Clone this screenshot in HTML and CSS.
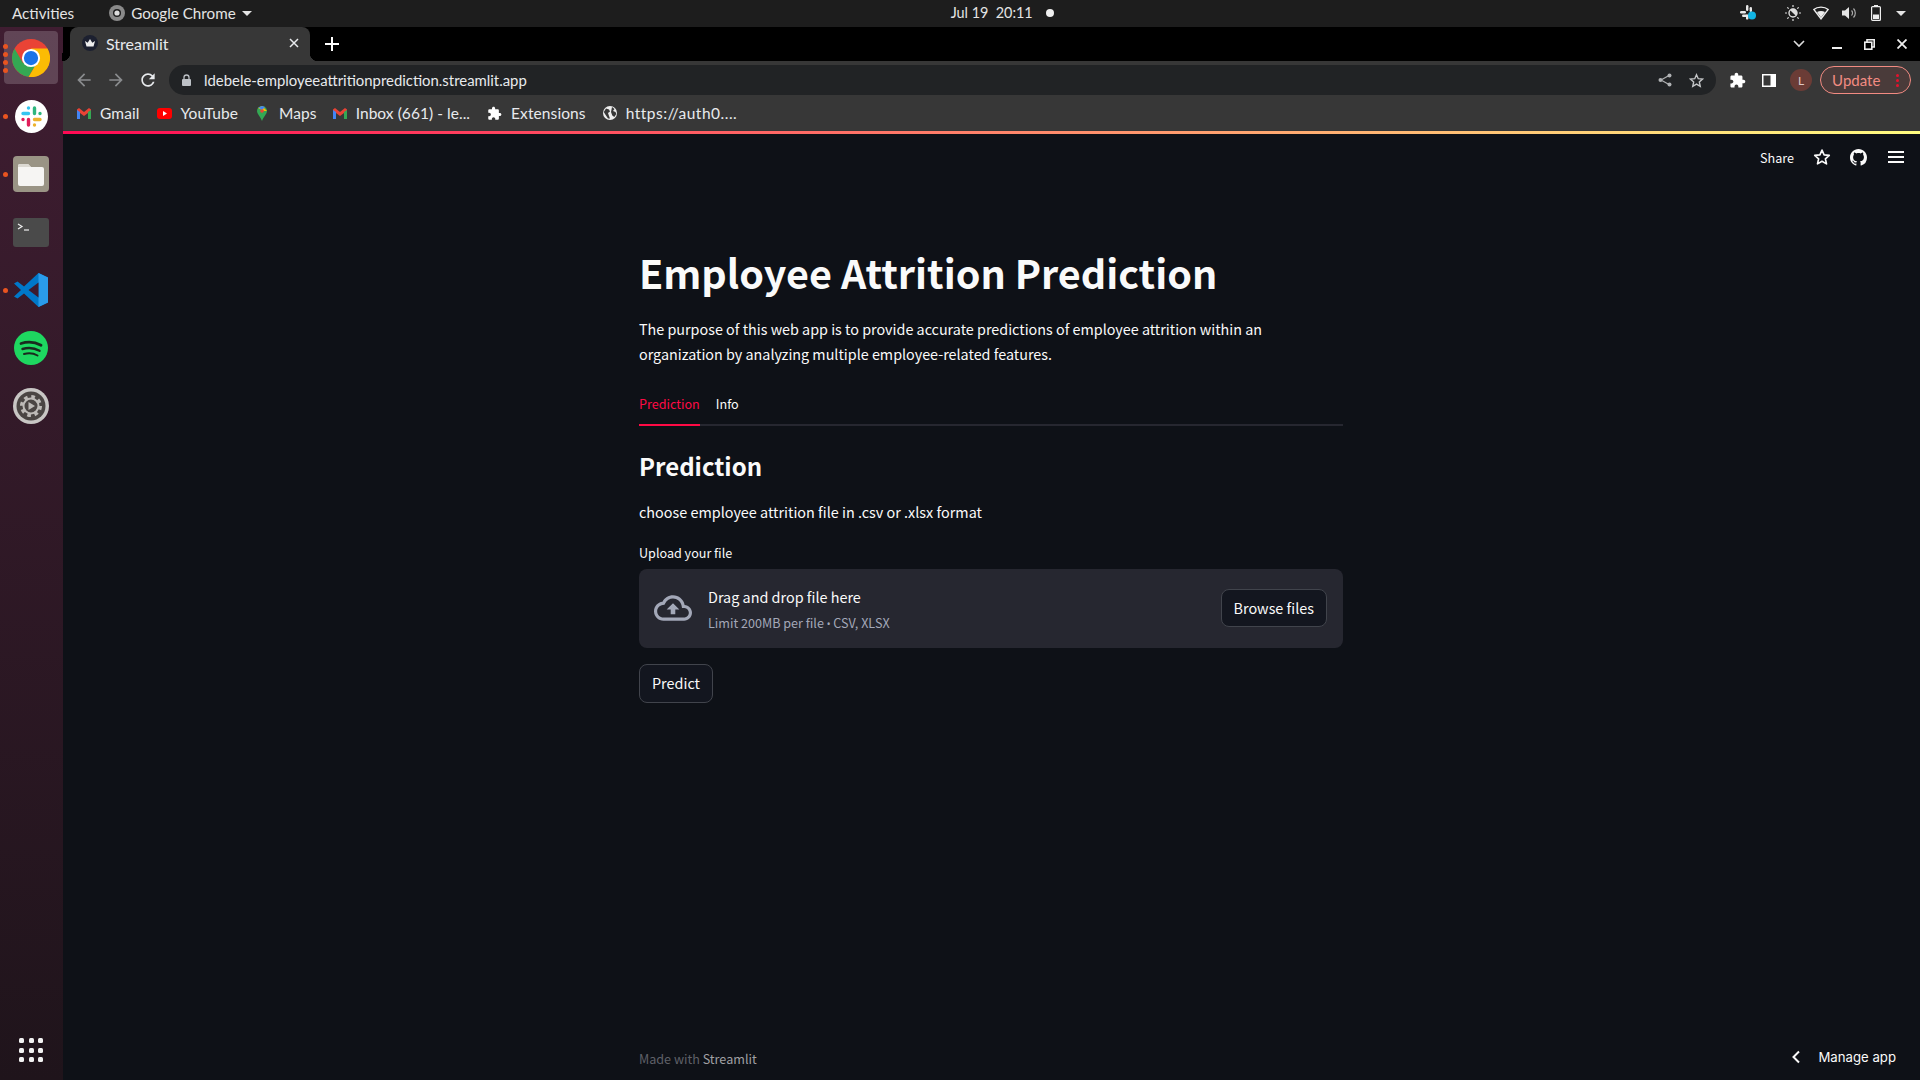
FILE: index.html
```html
<!DOCTYPE html>
<html lang="en">
<head>
    <meta charset="UTF-8">
    <title>Streamlit</title>
    <link rel="stylesheet" href="styles.css">
</head>
<body>
<div class="desktop">
    <header class="topbar">
        <span class="activities">Activities</span>
        <span class="app-menu">
            <svg class="app-menu-icon" viewBox="0 0 16 16"><circle cx="8" cy="8" r="8" fill="#8a8a8a"/><circle cx="8" cy="8" r="4" fill="#1d1d1d"/><circle cx="8" cy="8" r="2.6" fill="#ddd"/></svg>
            Google Chrome
            <i class="caret"></i>
        </span>
        <span class="clock">Jul 19&nbsp; 20:11<i class="clock-dot"></i></span>
        <span class="tray">
            <svg class="tray-slack" width="18" height="16" viewBox="0 0 18 16"><g fill="#e8e8e8"><rect x="0" y="6" width="6" height="2.4" rx="1.2"/><rect x="6" y="0" width="2.4" height="6" rx="1.2"/><rect x="9.6" y="2" width="2.4" height="5" rx="1.2"/><rect x="2" y="9.6" width="6" height="2.4" rx="1.2"/><rect x="6" y="9.6" width="2.4" height="5" rx="1.2"/></g><circle cx="12" cy="10.5" r="4" fill="#12b5e5"/></svg>
            <svg width="16" height="16" viewBox="0 0 16 16"><circle cx="8" cy="8" r="4" fill="none" stroke="#ddd" stroke-width="1.4"/><path d="M8 4a4 4 0 0 1 0 8z" fill="#ddd" transform="rotate(-45 8 8)"/><path d="M8 0v2M8 14v2M0 8h2M14 8h2M2.3 2.3l1.4 1.4M12.3 12.3l1.4 1.4M13.7 2.3l-1.4 1.4M3.7 12.3l-1.4 1.4" stroke="#ddd" stroke-width="1.2"/></svg>
            <svg width="16" height="14" viewBox="0 0 16 14"><path d="M0.8 3.5C4.5 0.3 11.5 0.3 15.2 3.5L8 12.8z" fill="none" stroke="#eee" stroke-width="1.4"/><path d="M4 6C6.5 4.6 9.5 4.6 12 6L8 11.500z" fill="#eee"/></svg>
            <svg width="16" height="14" viewBox="0 0 16 14"><path d="M0 4.500h3L7 1v12l-4-3.500H0z" fill="#e4e4e4"/><path d="M9.500 4.500a3.500 3.500 0 0 1 0 5M11.500 2.500a6.500 6.500 0 0 1 0 9" fill="none" stroke="#aaa" stroke-width="1.2"/></svg>
            <svg width="10" height="16" viewBox="0 0 10 16"><rect x=".6" y="1.600" width="8.800" height="13.800" rx="1" fill="none" stroke="#eee" stroke-width="1.2"/><rect x="3" y="0" width="4" height="1.600" fill="#eee"/><rect x="2" y="9.500" width="6" height="4.500" fill="#eee"/></svg>
            <i class="caret"></i>
        </span>
    </header>

    <div class="workarea">
        <nav class="dock">
            <div class="dock-item dock-active">
                <span class="run-dots"><i></i><i></i><i></i><i></i></span>
                <svg width="38" height="38" viewBox="0 0 48 48"><circle cx="24" cy="24" r="24" fill="#ea4335"/><path d="M3.200 12A24 24 0 0 0 21 47.800L31 31 13.600 30z" fill="#34a853"/><path d="M21 48A24 24 0 0 0 44.800 12H24l7 19z" fill="#fbbc04"/><circle cx="24" cy="24" r="11.500" fill="#fff"/><circle cx="24" cy="24" r="9" fill="#1a73e8"/></svg>
            </div>
            <div class="dock-item">
                <span class="run-dots"><i></i></span>
                <svg width="33" height="33" viewBox="0 0 33 33"><circle cx="16.500" cy="16.500" r="16.500" fill="#fff"/><g stroke-width="3.4" stroke-linecap="round" fill="none"><path d="M8 13.500h5.500M13.500 8h.01" stroke="#36c5f0"/><path d="M19.500 8v5.500M25 13.500h.01" stroke="#2eb67d"/><path d="M19.500 19.500H25M19.500 25h.01" stroke="#ecb22e"/><path d="M13.500 19.500V25M8 19.500h.01" stroke="#e01e5a"/></g></svg>
            </div>
            <div class="dock-item">
                <span class="run-dots"><i></i></span>
                <svg width="36" height="36" viewBox="0 0 36 36"><rect width="36" height="36" rx="4" fill="#9a9485"/><path d="M5 10a2 2 0 0 1 2-2h8l3 3h11a2 2 0 0 1 2 2v15a2 2 0 0 1-2 2H7a2 2 0 0 1-2-2z" fill="#f6f5f3"/><path d="M5 10a2 2 0 0 1 2-2h8l3 3H5z" fill="#dcd9d2"/></svg>
            </div>
            <div class="dock-item">
                <svg width="36" height="29" viewBox="0 0 36 29"><rect width="36" height="29" rx="3" fill="#4a4a4a"/><path d="M5 6l4 2.500-4 2.500" fill="none" stroke="#eee" stroke-width="1.2"/><path d="M11 12h5" stroke="#eee" stroke-width="1.2"/></svg>
            </div>
            <div class="dock-item">
                <span class="run-dots"><i></i></span>
                <svg width="34" height="34" viewBox="0 0 34 34"><path d="M24.500 0L34 4.500v25L24.500 34 10 20.500 3.500 25.500 0 23.500 7 17 0 10.500 3.500 8.500 10 13.500z" fill="#0078c9"/><path d="M24.500 0L34 4.500v25L24.500 34z" fill="#2a9bea"/><path d="M24.500 9.500L14.500 17l10 7.500z" fill="#3d1c2e"/></svg>
            </div>
            <div class="dock-item">
                <svg width="34" height="34" viewBox="0 0 34 34"><circle cx="17" cy="17" r="17" fill="#1ed760"/><g fill="none" stroke="#1a2a1e" stroke-linecap="round"><path d="M7 12.500c6.500-2 14-1.500 20 1.800" stroke-width="2.8"/><path d="M8.500 18c5.500-1.500 12-1 17 1.800" stroke-width="2.4"/><path d="M10 23c4.500-1.200 9.500-.8 13.500 1.500" stroke-width="2"/></g></svg>
            </div>
            <div class="dock-item">
                <svg width="36" height="36" viewBox="0 0 36 36"><circle cx="18" cy="18" r="18" fill="#c8c6c4"/><circle cx="18" cy="18" r="14.500" fill="#4a4543"/><circle cx="18" cy="18" r="9" fill="none" stroke="#bdbab7" stroke-width="4" stroke-dasharray="3.500 3.570"/><circle cx="18" cy="18" r="7.500" fill="none" stroke="#bdbab7" stroke-width="2"/><path d="M15.500 14l6.500 4-6.500 4z" fill="#bdbab7"/></svg>
            </div>
            <div class="dock-apps">
                <i></i><i></i><i></i><i></i><i></i><i></i><i></i><i></i><i></i>
            </div>
        </nav>

        <div class="window">
            <div class="tabstrip">
                <div class="tab">
                    <svg class="favicon" width="16" height="16" viewBox="0 0 16 16"><circle cx="8" cy="8" r="8" fill="#1c2030"/><path d="M3 6l2.700 1.800L8 4l2.300 3.800L13 6l-1.500 5.500h-7z" fill="#eee"/></svg>
                    <span class="tab-title">Streamlit</span>
                    <svg width="10" height="10" viewBox="0 0 10 10"><path d="M1 1l8 8M9 1l-8 8" stroke="#e8eaed" stroke-width="1.5"/></svg>
                </div>
                <svg class="new-tab" width="14" height="14" viewBox="0 0 14 14"><path d="M7 0v14M0 7h14" stroke="#fff" stroke-width="2"/></svg>
                <span class="spacer"></span>
                <svg class="tab-list" width="12" height="8" viewBox="0 0 12 8"><path d="M1 1l5 5 5-5" fill="none" stroke="#ddd" stroke-width="1.6"/></svg>
                <span class="win-min"></span>
                <svg class="win-restore" width="11" height="11" viewBox="0 0 11 11"><path d="M3 3V.8h7.200V8H8" fill="none" stroke="#eee" stroke-width="1.6"/><rect x=".8" y="3.200" width="7" height="7" fill="none" stroke="#eee" stroke-width="1.6"/></svg>
                <svg class="win-close" width="10" height="10" viewBox="0 0 10 10"><path d="M.5.5l9 9M9.500.5l-9 9" stroke="#eee" stroke-width="1.8"/></svg>
            </div>

            <div class="toolbar">
                <svg width="20" height="20" viewBox="0 0 24 24"><path d="M20 11H7.800l5.600-5.600L12 4l-8 8 8 8 1.400-1.400L7.800 13H20z" fill="#8a8c8e"/></svg>
                <svg class="nav-forward" width="20" height="20" viewBox="0 0 24 24"><path d="M4 11h12.200l-5.600-5.600L12 4l8 8-8 8-1.400-1.400 5.600-5.600H4z" fill="#8a8c8e"/></svg>
                <svg class="nav-reload" width="20" height="20" viewBox="0 0 24 24"><path d="M17.650 6.350C16.200 4.900 14.210 4 12 4c-4.420 0-7.990 3.580-7.990 8s3.570 8 7.990 8c3.730 0 6.840-2.550 7.730-6h-2.080c-.82 2.330-3.040 4-5.650 4-3.310 0-6-2.690-6-6s2.690-6 6-6c1.660 0 3.140.69 4.220 1.780L13 11h7V4l-2.350 2.350z" fill="#e8eaed"/></svg>
                <div class="omnibox">
                    <svg width="9" height="12" viewBox="0 0 9 12"><rect y="5" width="9" height="7" rx="1" fill="#bdc1c6"/><path d="M2 5.500V3.500a2.500 2.500 0 0 1 5 0v2" fill="none" stroke="#bdc1c6" stroke-width="1.3"/></svg>
                    <span class="url">ldebele-employeeattritionprediction.streamlit.app</span>
                    <span class="spacer"></span>
                    <svg width="14" height="14" viewBox="0 0 14 14"><path d="M3 7l8-4.500M3 7l8 4.500" stroke="#b0b2b4" stroke-width="1.2"/><circle cx="2.500" cy="7" r="2" fill="#b0b2b4"/><circle cx="11.500" cy="2.500" r="2" fill="#b0b2b4"/><circle cx="11.500" cy="11.500" r="2" fill="#b0b2b4"/></svg>
                    <svg class="omni-star" width="15" height="15" viewBox="0 0 24 24"><path d="M12 2.800l2.800 6.300 6.900.7-5.200 4.600 1.500 6.800-6-3.500-6 3.500 1.500-6.800-5.200-4.600 6.900-.7z" fill="none" stroke="#c4c6c8" stroke-width="2.2"/></svg>
                </div>
                <svg class="ext-icon" width="17" height="17" viewBox="0 0 24 24"><path d="M20.500 11H19V7c0-1.100-.9-2-2-2h-4V3.500C13 2.120 11.880 1 10.500 1S8 2.120 8 3.500V5H4c-1.100 0-1.990.9-1.990 2v3.800H3.500c1.490 0 2.700 1.210 2.700 2.700s-1.210 2.700-2.700 2.700H2V20c0 1.100.9 2 2 2h3.800v-1.500c0-1.490 1.210-2.700 2.700-2.700 1.490 0 2.700 1.210 2.700 2.700V22H17c1.100 0 2-.9 2-2v-4h1.500c1.380 0 2.500-1.120 2.500-2.500S21.880 11 20.500 11z" fill="#fff"/></svg>
                <svg class="panel-icon" width="14" height="13" viewBox="0 0 14 13"><rect width="14" height="13" fill="#fff"/><rect x="1.500" y="1.500" width="7" height="10" fill="#373737"/></svg>
                <span class="avatar">L</span>
                <span class="update">Update<b class="update-dots"><i></i><i></i><i></i></b></span>
            </div>

            <div class="bookmarks">
                <span class="bookmark"><svg width="14" height="11" viewBox="0 0 14 11"><path d="M0 1.500V11h3V5l4 3 4-3v6h3V1.500L12 0 7 4 2 0z" fill="#ea4335"/><path d="M0 2v9h3V4z" fill="#4285f4"/><path d="M14 2v9h-3V4z" fill="#34a853"/></svg>Gmail</span>
                <span class="bookmark"><svg width="15" height="11" viewBox="0 0 15 11"><rect width="15" height="11" rx="3" fill="#f00"/><path d="M6 3l4 2.500L6 8z" fill="#fff"/></svg>YouTube</span>
                <span class="bookmark bm-maps"><svg width="10" height="15" viewBox="0 0 10 15"><path d="M5 0a5 5 0 0 1 5 5C10 8 6.500 10.500 5 15 3.500 10.500 0 8 0 5a5 5 0 0 1 5-5z" fill="#34a853"/><path d="M1 2l4-2 5 5-3 0z" fill="#fbbc04"/><path d="M1.500 1.500L5 0l3 1-3 3z" fill="#4285f4"/><circle cx="5" cy="5" r="1.800" fill="#ea4335"/></svg>Maps</span>
                <span class="bookmark bm-inbox"><svg width="14" height="11" viewBox="0 0 14 11"><path d="M0 1.500V11h3V5l4 3 4-3v6h3V1.500L12 0 7 4 2 0z" fill="#ea4335"/><path d="M0 2v9h3V4z" fill="#4285f4"/><path d="M14 2v9h-3V4z" fill="#34a853"/></svg>Inbox (661) - le...</span>
                <span class="bookmark"><svg width="15" height="15" viewBox="0 0 24 24"><path d="M20.500 11H19V7c0-1.100-.9-2-2-2h-4V3.500C13 2.120 11.880 1 10.500 1S8 2.120 8 3.500V5H4c-1.100 0-1.990.9-1.990 2v3.800H3.500c1.490 0 2.700 1.210 2.700 2.700s-1.210 2.700-2.700 2.700H2V20c0 1.100.9 2 2 2h3.800v-1.500c0-1.490 1.210-2.700 2.700-2.700 1.490 0 2.700 1.210 2.700 2.700V22H17c1.100 0 2-.9 2-2v-4h1.500c1.380 0 2.500-1.120 2.500-2.500S21.880 11 20.500 11z" fill="#fff"/></svg>Extensions</span>
                <span class="bookmark bm-auth"><svg width="14" height="14" viewBox="0 0 14 14"><circle cx="7" cy="7" r="7" fill="#eee"/><path d="M3 2.500l3 1 1 2-2 1.500 1 3 1 2.500-2 0L2 8 .8 6zM9 1l2.500 2-1.500 2 2.500 1 .8 2-2 3-2-1.500L8 6z" fill="#373737"/></svg>https://auth0....</span>
            </div>

            <div class="accent-line"></div>

            <div class="app">
                <div class="app-header">
                    <span class="share">Share</span>
                    <svg width="18" height="18" viewBox="0 0 24 24"><path d="M12 2.800l2.800 6.300 6.900.7-5.200 4.600 1.500 6.800-6-3.500-6 3.500 1.500-6.800-5.200-4.600 6.900-.7z" fill="none" stroke="#fafafa" stroke-width="2.2" stroke-linejoin="round"/></svg>
                    <svg class="gh-icon" width="17" height="17" viewBox="0 0 16 16"><path d="M8 0C3.580 0 0 3.580 0 8c0 3.540 2.290 6.530 5.470 7.590.4.070.55-.17.55-.38 0-.19-.01-.82-.01-1.490-2.010.37-2.530-.49-2.690-.94-.09-.23-.48-.94-.82-1.130-.28-.15-.68-.52-.01-.53.630-.01 1.080.58 1.230.82.720 1.210 1.870.87 2.330.66.070-.52.280-.87.510-1.070-1.780-.2-3.640-.89-3.640-3.950 0-.87.310-1.590.820-2.150-.08-.2-.36-1.020.08-2.120 0 0 .67-.21 2.200.82.640-.18 1.320-.27 2-.27s1.360.09 2 .27c1.530-1.040 2.200-.82 2.200-.82.440 1.100.16 1.920.08 2.120.51.560.82 1.270.82 2.150 0 3.070-1.870 3.750-3.650 3.950.29.250.54.730.54 1.480 0 1.070-.01 1.930-.01 2.200 0 .21.150.46.550.38A8.010 8.010 0 0 0 16 8c0-4.420-3.580-8-8-8z" fill="#fafafa"/></svg>
                    <span class="menu-icon"><i></i><i></i><i></i></span>
                </div>

                <main class="block">
                    <h1 class="title">Employee Attrition Prediction</h1>
                    <p class="intro">The purpose of this web app is to provide accurate predictions of employee attrition within an organization by analyzing multiple employee-related features.</p>

                    <div class="tabs">
                        <span class="tabs-item tabs-selected">Prediction</span>
                        <span class="tabs-item">Info</span>
                    </div>

                    <h2 class="subtitle">Prediction</h2>
                    <p class="choose">choose employee attrition file in .csv or .xlsx format</p>

                    <label class="upload-label">Upload your file</label>
                    <div class="dropzone">
                        <svg class="cloud" width="38" height="38" viewBox="0 0 24 24"><path d="M19.350 10.040C18.670 6.590 15.640 4 12 4 9.110 4 6.600 5.640 5.350 8.040 2.340 8.360 0 10.910 0 14c0 3.310 2.690 6 6 6h13c2.760 0 5-2.240 5-5 0-2.640-2.050-4.780-4.650-4.960zM19 18H6c-2.210 0-4-1.790-4-4 0-2.050 1.530-3.760 3.560-3.970l1.070-.11.500-.95C8.080 7.140 9.940 6 12 6c2.620 0 4.880 1.860 5.390 4.430l.3 1.500 1.530.11c1.560.1 2.780 1.410 2.780 2.960 0 1.650-1.350 3-3 3zM8 13h2.550v3h2.900v-3H16l-4-4z" fill="#a3a8b8"/></svg>
                        <div class="drop-text">
                            <span class="drop-main">Drag and drop file here</span>
                            <small class="drop-limit">Limit 200MB per file <span class="bullet">•</span> CSV, XLSX</small>
                        </div>
                        <button class="st-button">Browse files</button>
                    </div>
                    <button class="st-button predict">Predict</button>
                </main>

                <footer class="app-footer">
                    <span class="made">Made with <b>Streamlit</b></span>
                    <span class="manage">
                        <svg width="10" height="14" viewBox="0 0 10 14"><path d="M8 1.500L2.500 7 8 12.500" fill="none" stroke="#fafafa" stroke-width="2"/></svg>
                        Manage app
                    </span>
                </footer>
            </div>
        </div>
    </div>
</div>
</body>
</html>
```

FILE: styles.css
```css
* {
    margin: 0;
    padding: 0;
    box-sizing: border-box;
}
html, body {
    height: 100%;
    overflow: hidden;
}
body {
    background: #0e1117;
    font-family: "Noto Sans CJK SC", "Noto Sans", sans-serif;
    color: #fafafa;
}
i {
    font-style: normal;
}
svg {
    flex: none;
    display: block;
}
.spacer {
    flex: 1;
}
.desktop {
    height: 1080px;
    display: flex;
    flex-direction: column;
}

/* gnome top bar */
.topbar {
    height: 27px;
    flex: none;
    background: #1d1d1d;
    display: flex;
    align-items: center;
    font-family: Lato, sans-serif;
    font-size: 15.2px;
    line-height: 26px;
    padding: 0 14px 1px 12px;
    color: #e4e4e4;
}
.app-menu {
    display: flex;
    align-items: center;
    margin-left: 35px;
}
.app-menu-icon {
    width: 16px;
    height: 16px;
    margin-right: 6px;
}
.caret {
    width: 0;
    height: 0;
    border: 5px solid transparent;
    border-top: 5px solid #e4e4e4;
    border-bottom: 0;
    margin-left: 6px;
}
.clock {
    display: flex;
    align-items: center;
    margin-left: 699px;
    font-size: 14.4px;
    white-space: pre;
}
.clock-dot {
    width: 8px;
    height: 8px;
    border-radius: 50%;
    background: #f0f0f0;
    margin-left: 13px;
}
.tray {
    display: flex;
    align-items: center;
    margin-left: auto;
}
.tray svg {
    margin-right: 13px;
}
.tray .tray-slack {
    margin-right: 27px;
}
.tray svg:nth-child(2) {
    margin-right: 12px;
}
.tray svg:nth-child(5) {
    margin-right: 15px;
}
.tray .caret {
    margin-left: 0;
}

/* dock */
.workarea {
    flex: 1;
    display: flex;
    min-height: 0;
}
.dock {
    width: 63px;
    flex: none;
    background: linear-gradient(#3f1d31, #1f141b);
    padding: 2px 1px 0 0;
    display: flex;
    flex-direction: column;
    align-items: center;
}
.dock-item {
    width: 54px;
    height: 58px;
    display: flex;
    align-items: center;
    justify-content: center;
    position: relative;
}
.dock-active::before {
    content: "";
    position: absolute;
    inset: 2px 0 3px;
    background: rgba(255, 255, 255, .18);
    border-radius: 4px;
}
.dock-item svg {
    position: relative;
}
.run-dots {
    position: absolute;
    left: -1px;
    top: 0;
    bottom: 0;
    display: flex;
    flex-direction: column;
    justify-content: center;
    gap: 3px;
    z-index: 1;
}
.run-dots i {
    width: 5px;
    height: 5px;
    border-radius: 50%;
    background: #e95420;
}
.dock-apps {
    margin-top: auto;
    margin-bottom: 18px;
    width: 24px;
    height: 24px;
    display: grid;
    grid-template-columns: repeat(3, 5px);
    grid-template-rows: repeat(3, 5px);
    justify-content: space-between;
    align-content: space-between;
}
.dock-apps i {
    background: #f2f2f2;
    border-radius: 1.5px;
}

/* chrome */
.window {
    flex: 1;
    min-width: 0;
    display: flex;
    flex-direction: column;
}
.tabstrip {
    height: 34px;
    flex: none;
    background: #000;
    display: flex;
    align-items: center;
    padding: 0 13px 0 7px;
}
.tab {
    width: 240px;
    align-self: stretch;
    background: #373737;
    border-radius: 8px 8px 0 0;
    display: flex;
    align-items: center;
    padding: 0 11px 2px 12px;
    font-family: Lato, sans-serif;
    font-size: 16px;
    color: #e8eaed;
    position: relative;
}
.tab::before, .tab::after {
    content: "";
    position: absolute;
    bottom: 0;
    width: 8px;
    height: 8px;
}
.tab::before {
    left: -8px;
    background: radial-gradient(circle at 0 0, #000 8px, #373737 8.5px);
}
.tab::after {
    right: -8px;
    background: radial-gradient(circle at 100% 0, #000 8px, #373737 8.5px);
}
.favicon {
    margin-right: 8px;
}
.tab-title {
    flex: 1;
}
.new-tab {
    margin-left: 15px;
}
.tab-list {
    margin-right: 27px;
}
.win-min {
    width: 10px;
    height: 2px;
    background: #eee;
    margin-top: 8px;
    margin-right: 22px;
}
.win-restore {
    margin-right: 22px;
}
.toolbar {
    height: 38px;
    flex: none;
    background: #373737;
    display: flex;
    align-items: center;
    padding: 0 9px 0 11px;
}
.nav-forward {
    margin-left: 12px;
}
.nav-reload {
    margin-left: 12px;
}
.omnibox {
    width: 1549px;
    height: 30px;
    margin-left: 11px;
    background: #212325;
    border-radius: 15px;
    display: flex;
    align-items: center;
    padding: 0 12px 0 13px;
}
.url {
    margin-left: 13px;
    font-family: Lato, sans-serif;
    font-size: 14.9px;
    line-height: 28px;
    padding-bottom: 1px;
    color: #e8eaed;
}
.omni-star {
    margin-left: 17px;
}
.ext-icon {
    margin-left: 12.5px;
}
.panel-icon {
    margin-left: 16.5px;
}
.avatar {
    width: 22px;
    height: 22px;
    margin-left: 14px;
    border-radius: 50%;
    background: #6b3c36;
    color: #e0c8c4;
    font-family: Lato, sans-serif;
    font-size: 12px;
    display: flex;
    align-items: center;
    justify-content: center;
}
.update {
    width: 91px;
    height: 28px;
    margin-left: 8px;
    border: 1px solid #f28b82;
    border-radius: 14px;
    background: #4a3b3a;
    color: #f28b82;
    font-family: Lato, sans-serif;
    font-size: 15px;
    display: flex;
    align-items: center;
    padding-left: 11px;
}
.update-dots {
    display: flex;
    flex-direction: column;
    gap: 2px;
    margin-left: auto;
    margin-right: 11px;
}
.update-dots i {
    width: 3px;
    height: 3px;
    border-radius: 50%;
    background: #e8112d;
}
.bookmarks {
    height: 32px;
    flex: none;
    background: #373737;
    display: flex;
    align-items: center;
    padding: 0 0 4px 14px;
    gap: 17px;
    font-family: Lato, sans-serif;
    font-size: 15.5px;
    letter-spacing: .1px;
    color: #e8eaed;
}
.bookmark {
    display: flex;
    align-items: center;
    gap: 9px;
}
.bm-maps {
    gap: 12px;
    margin-left: 2px;
    margin-right: -1px;
}
.bm-inbox {
    letter-spacing: .05px;
}
.bm-auth {
    letter-spacing: .5px;
}
.accent-line {
    height: 3px;
    flex: none;
    background: linear-gradient(90deg, #ff0a54, #fffd80);
}

/* streamlit app */
.app {
    flex: 1;
    min-height: 0;
    background: #0e1117;
    display: flex;
    flex-direction: column;
}
.app-header {
    height: 46px;
    flex: none;
    display: flex;
    align-items: center;
    justify-content: flex-end;
    padding-right: 16px;
    gap: 19px;
}
.share {
    font-size: 12.6px;
}
.menu-icon {
    width: 16px;
    display: flex;
    flex-direction: column;
    gap: 3px;
    margin-left: 2px;
}
.menu-icon i {
    height: 2px;
    background: #fafafa;
}
.block {
    width: 704px;
    margin-left: 576px;
    padding-top: 60px;
    flex: 1;
}
.title {
    font-size: 39.5px;
    font-weight: 700;
    line-height: 64px;
    color: #fafafa;
}
.intro {
    font-size: 14.35px;
    line-height: 25px;
    margin-top: 12px;
}
.tabs {
    display: flex;
    gap: 16px;
    margin-top: 18.5px;
    height: 41px;
    border-bottom: 2px solid #262730;
    font-size: 12.6px;
    line-height: 38px;
}
.tabs-item {
    height: 41px;
}
.tabs-selected {
    color: #ff0a45;
    border-bottom: 2px solid #ff0a45;
}
.subtitle {
    font-size: 24px;
    font-weight: 600;
    line-height: 40px;
    margin-top: 20px;
}
.choose {
    font-size: 14.4px;
    line-height: 26px;
    margin-top: 13px;
}
.upload-label {
    display: block;
    font-size: 12.6px;
    line-height: 20px;
    margin-top: 18px;
}
.dropzone {
    height: 79px;
    margin-top: 6px;
    background: #262730;
    border-radius: 8px;
    display: flex;
    align-items: center;
    padding: 0 16px;
}
.cloud {
    margin-right: 16px;
    margin-left: -1px;
}
.drop-text {
    flex: 1;
    display: flex;
    flex-direction: column;
    padding-top: 2px;
}
.drop-main {
    font-size: 14.4px;
    line-height: 26px;
}
.drop-limit {
    font-size: 12.6px;
    line-height: 20px;
    margin-top: 3px;
    color: #a3a8b8;
}
.bullet {
    font-family: "Noto Sans", sans-serif;
    font-size: 10px;
}
.st-button {
    height: 38px;
    padding: 0 12px 1px;
    background: #13161f;
    border: 1px solid #41444c;
    border-radius: 8px;
    color: #fafafa;
    font-family: inherit;
    font-size: 14.4px;
}
.predict {
    display: block;
    height: 39px;
    margin-top: 16px;
}
.app-footer {
    height: 46px;
    flex: none;
    display: flex;
    align-items: center;
    justify-content: space-between;
    padding: 0 24px 0 576px;
}
.made {
    font-size: 12.6px;
    line-height: 20px;
    margin-top: 3px;
    color: #5f6068;
}
.made b {
    font-weight: 400;
    color: #a0a0a4;
}
.manage {
    display: flex;
    align-items: center;
    gap: 17px;
    font-family: Inter, sans-serif;
    font-size: 13.2px;
}
```
